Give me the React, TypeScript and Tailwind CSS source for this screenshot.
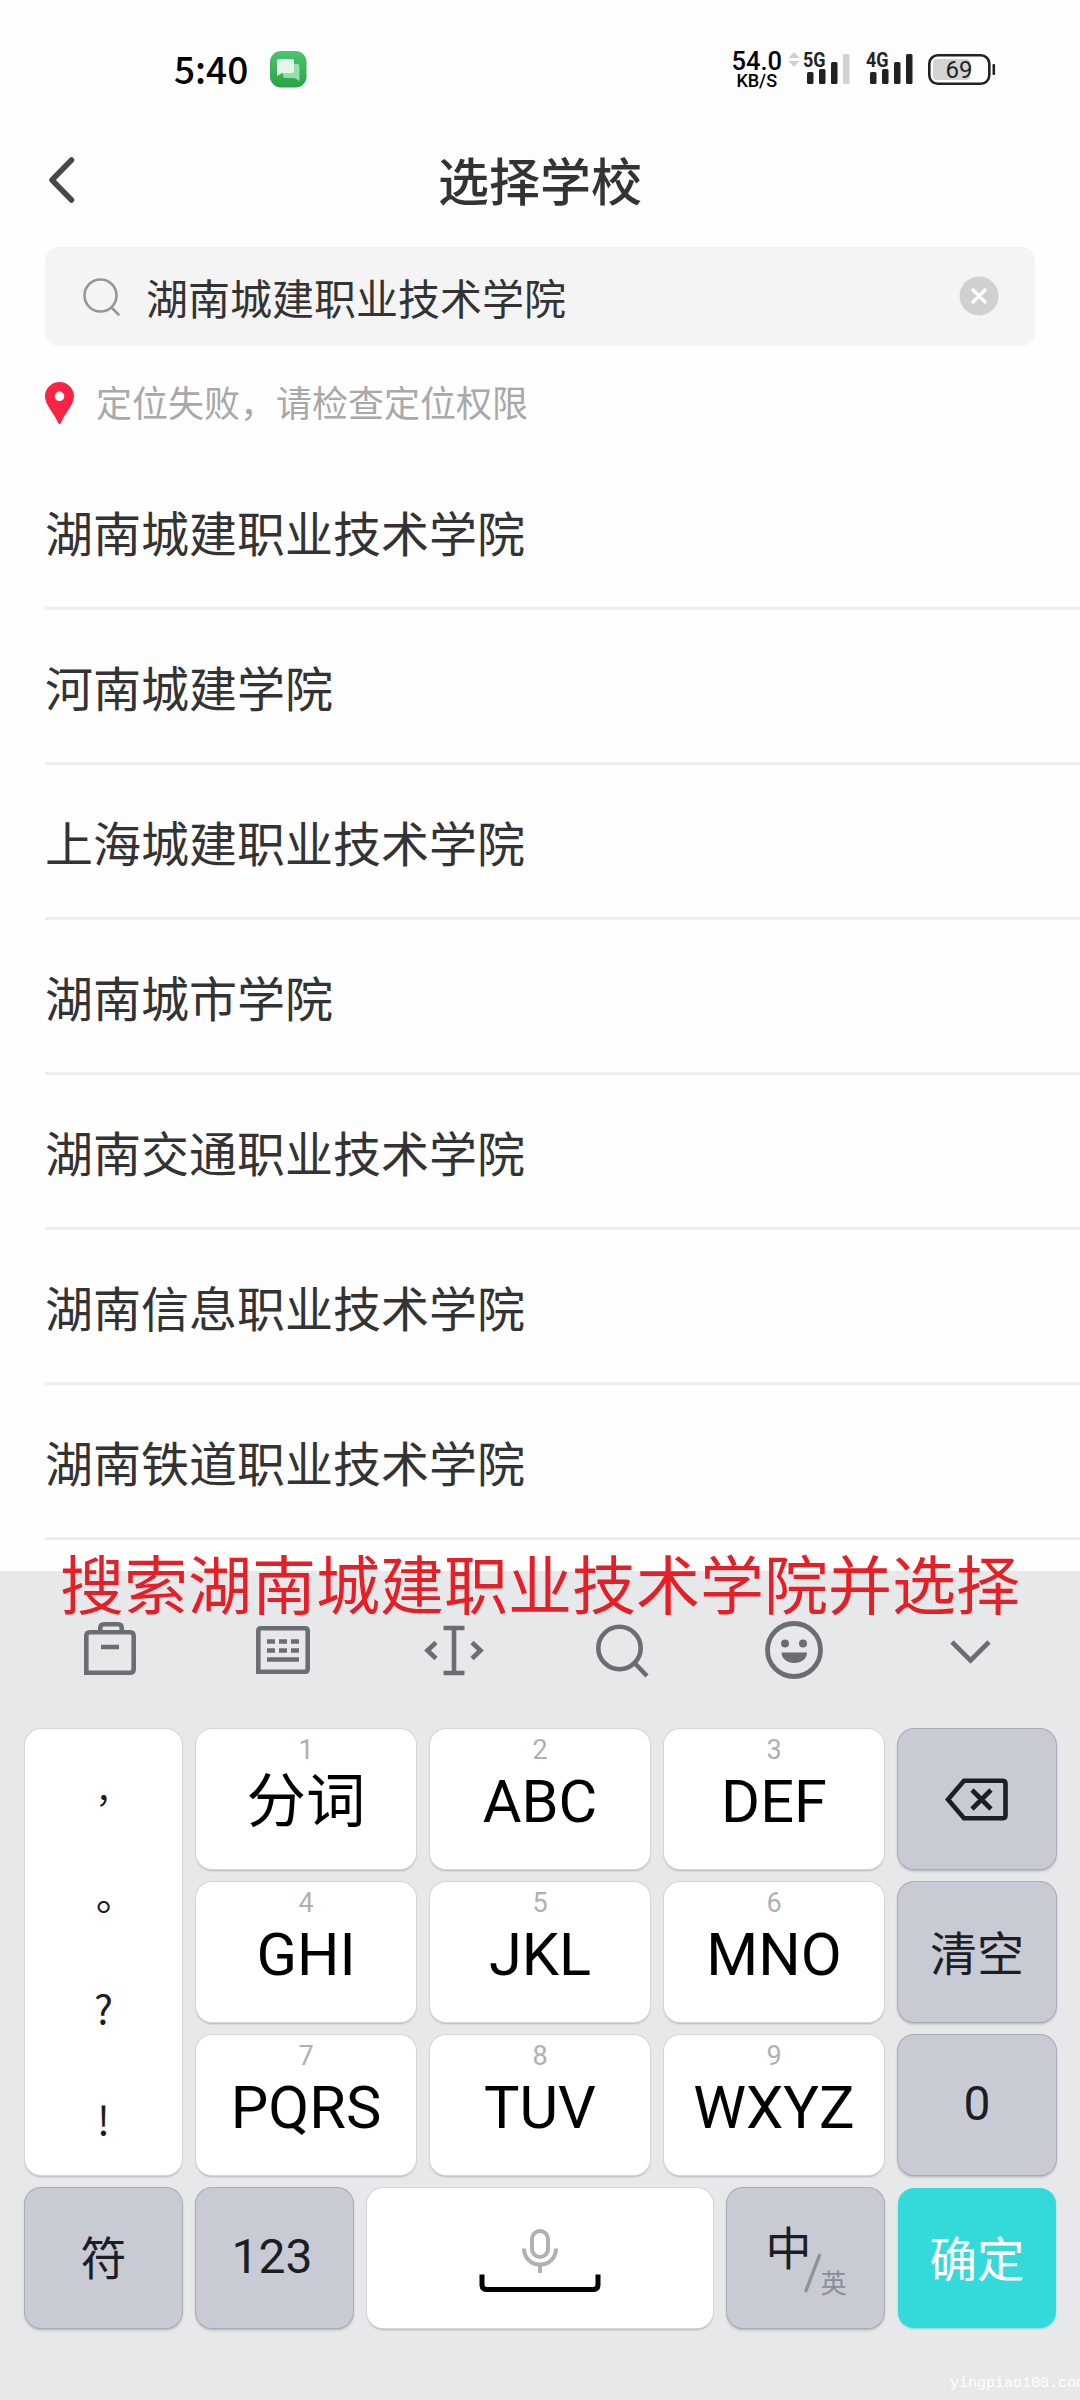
import React from 'react';

interface LetterKey {
  hint: string;
  label: string;
}

const schools: string[] = [
  '湖南城建职业技术学院',
  '河南城建学院',
  '上海城建职业技术学院',
  '湖南城市学院',
  '湖南交通职业技术学院',
  '湖南信息职业技术学院',
  '湖南铁道职业技术学院',
];

const letterRows: LetterKey[][] = [
  [{ hint: '1', label: '分词' }, { hint: '2', label: 'ABC' }, { hint: '3', label: 'DEF' }],
  [{ hint: '4', label: 'GHI' }, { hint: '5', label: 'JKL' }, { hint: '6', label: 'MNO' }],
  [{ hint: '7', label: 'PQRS' }, { hint: '8', label: 'TUV' }, { hint: '9', label: 'WXYZ' }],
];

const whiteKey = 'bg-white rounded-[16px] shadow-[0_0_0_1px_#d3d5d8,0_2px_2px_#b4b7bc]';
const grayKey = 'bg-[#c9cbd4] text-[#1c1e26] rounded-[16px] shadow-[0_0_0_1px_#a9abb2,0_2px_3px_#a9acb3] flex items-center justify-center';

function Signal({ label, weak }: { label: string; weak?: boolean }) {
  return (
    <svg className="overflow-visible" width="48" height="34" viewBox="0 0 48 34" fill="#222">
      <text x="0" y="15" textLength="22.500" lengthAdjust="spacingAndGlyphs" fontSize="20" fontWeight="700" fontFamily="Roboto, sans-serif">{label}</text>
      <rect x="4" y="20" width="6.5" height="12" rx="1.5" />
      <rect x="16" y="17" width="6.5" height="15" rx="1.5" />
      <rect x="28" y="10" width="6.5" height="22" rx="1.5" />
      <rect x="40" y="2" width="6.5" height="30" rx="1.5" fill={weak ? '#d2d2d2' : '#222'} />
    </svg>
  );
}

function StatusBar() {
  return (
    <div className="h-[136px] flex items-start pl-[174px] pr-[83px]">
      <span className="mt-[40px] w-[73px] text-[37px] leading-[56px] font-medium text-black">5:40</span>
      <svg className="ml-[23px] mt-[51px]" width="37" height="37" viewBox="0 0 37 37">
        <defs>
          <linearGradient id="msg" x1="0" y1="0" x2="0" y2="1">
            <stop offset="0" stopColor="#4cc471" />
            <stop offset="1" stopColor="#27a444" />
          </linearGradient>
        </defs>
        <rect width="36.5" height="36.5" rx="11" fill="url(#msg)" />
        <path d="M15 13h12.500q2 0 2 2v15l-5-3h-9.500q-2 0-2-2v-10q0-2 2-2z" fill="#9bdcae" />
        <path d="M9 8h13q2 0 2 2v10q0 2-2 2h-9.500L7 25V10q0-2 2-2z" fill="#e3f7e8" />
      </svg>
      <div className="ml-auto flex items-start">
        <div className="mt-[48px] flex flex-col items-center text-black font-medium font-['Roboto',sans-serif]">
          <span className="text-[25.5px] leading-[26px]">54.0</span>
          <span className="text-[18px] leading-[14px]">KB/S</span>
        </div>
        <svg className="ml-[6px] mt-[52px]" width="12" height="16" viewBox="0 0 12 16" fill="#cfcfcf">
          <path d="M6 0l5.500 6H.5zM6 15L.5 9h11z" />
        </svg>
        <div className="ml-[3px] mt-[52px] flex gap-[15px]">
          <Signal label="5G" weak />
          <Signal label="4G" />
        </div>
        <svg className="ml-[13px] mt-[53px] overflow-visible" width="70" height="34" viewBox="0 0 70 34">
          <rect x="6" y="6" width="37" height="21" rx="4" fill="#d3d3d3" />
          <rect x="2.300" y="2.300" width="60" height="28.500" rx="8.500" fill="none" stroke="#222" strokeWidth="2.600" />
          <rect x="65.500" y="11" width="2.600" height="11" rx="1" fill="#222" />
          <text x="32" y="25" textAnchor="middle" fontSize="24" fontFamily="Roboto, sans-serif" fill="#222">69</text>
        </svg>
      </div>
    </div>
  );
}

function NavBar() {
  return (
    <div className="h-[111px] grid grid-cols-[120px_1fr_120px] items-start text-[#333]">
      <svg className="ml-[46px] mt-[18px]" width="32" height="52" viewBox="0 0 32 52" fill="none" stroke="#484848" strokeWidth="5.500" strokeLinecap="round" strokeLinejoin="round">
        <path d="M25.500 6L6 26l19.500 20" />
      </svg>
      <h1 className="mt-[6px] text-center text-[51px] leading-[74px] font-medium">选择学校</h1>
    </div>
  );
}

function SearchBox() {
  return (
    <div className="mx-[45px] h-[99px] rounded-[14px] bg-[#f4f4f4] flex items-center pl-[37px] pr-[36px]">
      <svg width="40" height="40" viewBox="0 0 40 40" fill="none" stroke="#969696" strokeWidth="2.600" strokeLinecap="round">
        <circle cx="18.500" cy="18.500" r="16" />
        <path d="M29.500 30.500l7 7" />
      </svg>
      <span className="ml-[24px] text-[42px] leading-[60px] text-[#333]">湖南城建职业技术学院</span>
      <svg className="ml-auto -mt-[2px]" width="40" height="40" viewBox="0 0 40 40">
        <circle cx="20" cy="20" r="19.500" fill="#d0d0d0" />
        <path d="M13 13l14 14M27 13L13 27" stroke="#fff" strokeWidth="3.200" />
      </svg>
    </div>
  );
}

function LocationTip() {
  return (
    <div className="h-[109px] flex items-center pl-[45px] pt-[5px]">
      <svg width="29" height="42" viewBox="0 0 29 42">
        <path fillRule="evenodd" d="M14.500 0C6.500 0 0 6.300 0 14.200c0 8.800 8.800 16.300 13 26.500q1.500 2.600 3 0C20.200 30.500 29 23 29 14.200 29 6.300 22.500 0 14.500 0zm0 9.500a4.800 4.800 0 110 9.600 4.800 4.800 0 010-9.600z" fill="#fa2545" />
      </svg>
      <span className="ml-[22px] -mt-[4px] text-[36px] leading-[52px] text-[#a8a8a8]">定位失败，请检查定位权限</span>
    </div>
  );
}

function SchoolList() {
  return (
    <ul className="h-[1116px] pl-[45px]">
      {schools.map((name) => (
        <li key={name} className="h-[155px] border-b-[3px] border-[#eee] flex items-center text-[48px] leading-[70px] text-[#333]">
          {name}
        </li>
      ))}
    </ul>
  );
}

function Toolbar() {
  return (
    <div className="h-[157px] pl-[76px] pr-[76px] pt-[42px] flex items-start justify-between">
      <svg width="68" height="68" viewBox="0 0 68 68" fill="none" stroke="#6b6d70" strokeWidth="4.600">
        <path d="M10.300 58.700V22q0-3.700 3.700-3.700h40q3.700 0 3.700 3.700v33q0 3.700-3.700 3.700zM24.300 18.300V14q0-3.700 3.700-3.700h14q3.700 0 3.700 3.700v4.300M25 33h18" />
      </svg>
      <svg width="68" height="68" viewBox="0 0 68 68" fill="none" stroke="#6b6d70" strokeWidth="4.600">
        <path d="M9.300 57.700V17q0-2.700 2.700-2.700h44q2.700 0 2.700 2.700v38q0 2.700-2.700 2.700z" />
        <path d="M18 27.500h8m4 0h8m4 0h8M18 36.500h8m4 0h8m4 0h8M18 45.500h32" />
      </svg>
      <svg className="-ml-[4px]" width="72" height="68" viewBox="0 0 72 68" fill="none" stroke="#6b6d70" strokeWidth="4.600">
        <path d="M25.500 14h21M25.500 59h21M36 14V59" />
        <path d="M18 28.500L9.500 36.500 18 44.500M54 28.500l8.500 8-8.500 8" />
      </svg>
      <svg className="-ml-[4px]" width="68" height="68" viewBox="0 0 68 68" fill="none" stroke="#6b6d70" strokeWidth="4.600">
        <circle cx="29.500" cy="34" r="21.200" />
        <path d="M45 49.500l12 12.500" />
      </svg>
      <svg width="68" height="68" viewBox="0 0 68 68">
        <circle cx="31" cy="36" r="26.500" fill="none" stroke="#6b6d70" strokeWidth="4.800" />
        <g fill="#6b6d70">
          <circle cx="22" cy="29.500" r="4" />
          <circle cx="40" cy="29.500" r="4" />
          <path d="M18.500 38.500h25.500c0 6-5.500 10.500-12.700 10.500s-12.800-4.500-12.800-10.500z" />
        </g>
      </svg>
      <svg width="68" height="68" viewBox="0 0 68 68" fill="none" stroke="#6b6d70" strokeWidth="4.600">
        <path d="M16 28l18.500 18.500L53 28" />
      </svg>
    </div>
  );
}

function Keypad() {
  return (
    <div className="pl-[25px] pr-[24px] flex flex-col gap-[13px]">
      <div className="flex gap-[14px]">
        <div className={`w-[157px] h-[446px] flex flex-col items-center pt-[17px] text-[40px] leading-[106px] text-[#1c1c1c] font-['Noto_Sans_CJK_TC',sans-serif] ${whiteKey}`}>
          <span className="text-[34px]">，</span>
          <span>。</span>
          <span className="-mt-[4px]">?</span>
          <span className="mt-[5px]">!</span>
        </div>
        <div className="flex flex-col gap-[13px]">
          {letterRows.map((row, i) => (
            <div key={i} className="flex gap-[14px]">
              {row.map((k) => (
                <div key={k.hint} className={`w-[220px] h-[140px] flex flex-col items-center font-['Roboto','Noto_Sans_CJK_SC',sans-serif] ${whiteKey}`}>
                  <span className="mt-[5px] text-[27px] leading-[32px] text-[#b0b0b0]">{k.hint}</span>
                  <span className="mt-px text-[59.5px] leading-[70px] text-black">{k.label}</span>
                </div>
              ))}
            </div>
          ))}
        </div>
        <div className="flex flex-col gap-[13px]">
          <div className={`w-[158px] h-[140px] ${grayKey}`}>
            <svg width="64" height="44" viewBox="0 0 64 44" fill="none" stroke="#1c1e26" strokeWidth="4.600">
              <path d="M3 22.500L19 3.800h38.500q3 0 3 3v31.400q0 3-3 3H19z" />
              <path d="M27 13l19 19M46 13l-19 19" />
            </svg>
          </div>
          <div className={`w-[158px] h-[140px] pb-[2px] text-[47px] ${grayKey}`}>清空</div>
          <div className={`w-[158px] h-[140px] pb-[2px] text-[48px] font-['Roboto',sans-serif] ${grayKey}`}>0</div>
        </div>
      </div>
      <div className="flex gap-[14px]">
        <div className={`w-[157px] h-[140px] pb-[5px] text-[46px] ${grayKey}`}>符</div>
        <div className={`w-[157px] h-[140px] pr-[5px] pb-[2px] text-[48px] font-['Roboto',sans-serif] ${grayKey}`}>123</div>
        <div className={`w-[346px] h-[140px] flex flex-col items-center pt-[40px] ${whiteKey}`}>
          <svg width="122" height="66" viewBox="0 0 122 66" fill="none">
            <rect x="53" y="3" width="16" height="26" rx="8" stroke="#b0b0b0" strokeWidth="4" />
            <path d="M45 20.500c0 9 6.500 16 16 16s16-7 16-16M61 36v9" stroke="#b0b0b0" strokeWidth="4" />
            <path d="M3 46.500v10q0 5 5 5h106q5 0 5-5v-10" stroke="#000" strokeWidth="5" />
          </svg>
        </div>
        <div className={`w-[157px] h-[140px] ${grayKey}`}>
          <div className="flex w-[80px] h-[80px] items-start">
            <span className="mt-[4px] text-[46px] leading-[46px]">中</span>
            <svg className="-ml-[9px] mt-[34px] shrink-0" width="20" height="42" viewBox="0 0 20 42" stroke="#909299" strokeWidth="3.400">
              <path d="M2.500 40L17 2" />
            </svg>
            <span className="-ml-[2px] mt-[50px] text-[26px] leading-[28px] text-[#8b8d95]">英</span>
          </div>
        </div>
        <div className="w-[158px] h-[140px] pb-[2px] rounded-[16px] bg-[#34dada] text-white text-[47.5px] flex items-center justify-center shadow-[0_1px_2px_#7fdcdc]">确定</div>
      </div>
    </div>
  );
}

export default function App() {
  return (
    <div className="relative w-[1080px] h-[2400px] overflow-hidden bg-[#fefefe] font-['Noto_Sans_CJK_SC',sans-serif]">
      <StatusBar />
      <NavBar />
      <SearchBox />
      <LocationTip />
      <SchoolList />
      <div className="h-[829px] pt-px bg-[#e7e8ea]">
        <Toolbar />
        <Keypad />
      </div>
      {/* caption laid over the top edge of the keyboard */}
      <p className="absolute left-[60px] top-[1535px] text-[64px] leading-[92px] text-[#e61f26] whitespace-nowrap">搜索湖南城建职业技术学院并选择</p>
      <span className="absolute left-[950px] top-[2374px] text-[15px] leading-[20px] text-white font-['Liberation_Mono',monospace]">yingpiao100.com</span>
    </div>
  );
}
